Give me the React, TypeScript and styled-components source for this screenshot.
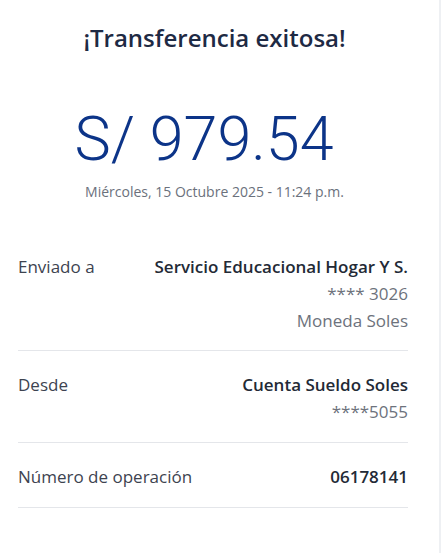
import styled, { createGlobalStyle } from 'styled-components'

const GlobalStyle = createGlobalStyle`
    html, body {
        margin: 0;
        padding: 0;
        background: #ffffff;
    }
    body {
        font-family: 'Open Sans', 'Noto Sans', sans-serif;
    }
`

const Screen = styled.div`
    width: 441px;
    height: 553px;
    box-sizing: border-box;
    border-right: 2px solid #eef0f3;
    background: #ffffff;
    overflow: hidden;
`

const Header = styled.div`
    display: flex;
    flex-direction: column;
    align-items: center;
    padding: 23px 10px 0 0;
`

const Title = styled.h1`
    margin: 0;
    font-size: 24px;
    line-height: 30px;
    font-weight: 600;
    color: #1e2a44;
`

const Amount = styled.div`
    margin-top: 50px;
    padding-right: 21px;
    font-family: 'Roboto', sans-serif;
    font-size: 61px;
    line-height: 72px;
    font-weight: 300;
    color: #0c3488;
`

const DateText = styled.div`
    margin-top: 7px;
    font-size: 14px;
    line-height: 20px;
    color: #6b717c;
`

const Details = styled.div`
    margin: 51px 31px 0 18px;
`

const Row = styled.div`
    display: flex;
    justify-content: space-between;
    padding: 20px 0 17px;
    border-bottom: 1px solid #e4e6ea;
    &:first-child {
        padding-top: 0;
        padding-bottom: 16px;
    }
`

const Label = styled.div`
    font-size: 17px;
    line-height: 27px;
    color: #3d4350;
`

const Values = styled.div`
    display: flex;
    flex-direction: column;
    align-items: flex-end;
`

const Value = styled.div<{ $strong?: boolean }>`
    font-size: 17px;
    line-height: 27px;
    font-weight: ${p => (p.$strong ? 600 : 400)};
    color: ${p => (p.$strong ? '#232a36' : '#6d727c')};
`

type Detail = { label: string; main: string; extra: string[] }

const details: Detail[] = [
    { label: 'Enviado a', main: 'Servicio Educacional Hogar Y S.', extra: ['**** 3026', 'Moneda Soles'] },
    { label: 'Desde', main: 'Cuenta Sueldo Soles', extra: ['****5055'] },
    { label: 'Número de operación', main: '06178141', extra: [] },
]

export default function App() {
    return (
        <>
            <GlobalStyle />
            <Screen>
                <Header>
                    <Title>¡Transferencia exitosa!</Title>
                    <Amount>S/ 979.54</Amount>
                    <DateText>Miércoles, 15 Octubre 2025 - 11:24 p.m.</DateText>
                </Header>
                <Details>
                    {details.map(d => (
                        <Row key={d.label}>
                            <Label>{d.label}</Label>
                            <Values>
                                <Value $strong>{d.main}</Value>
                                {d.extra.map(e => (
                                    <Value key={e}>{e}</Value>
                                ))}
                            </Values>
                        </Row>
                    ))}
                </Details>
            </Screen>
        </>
    )
}
